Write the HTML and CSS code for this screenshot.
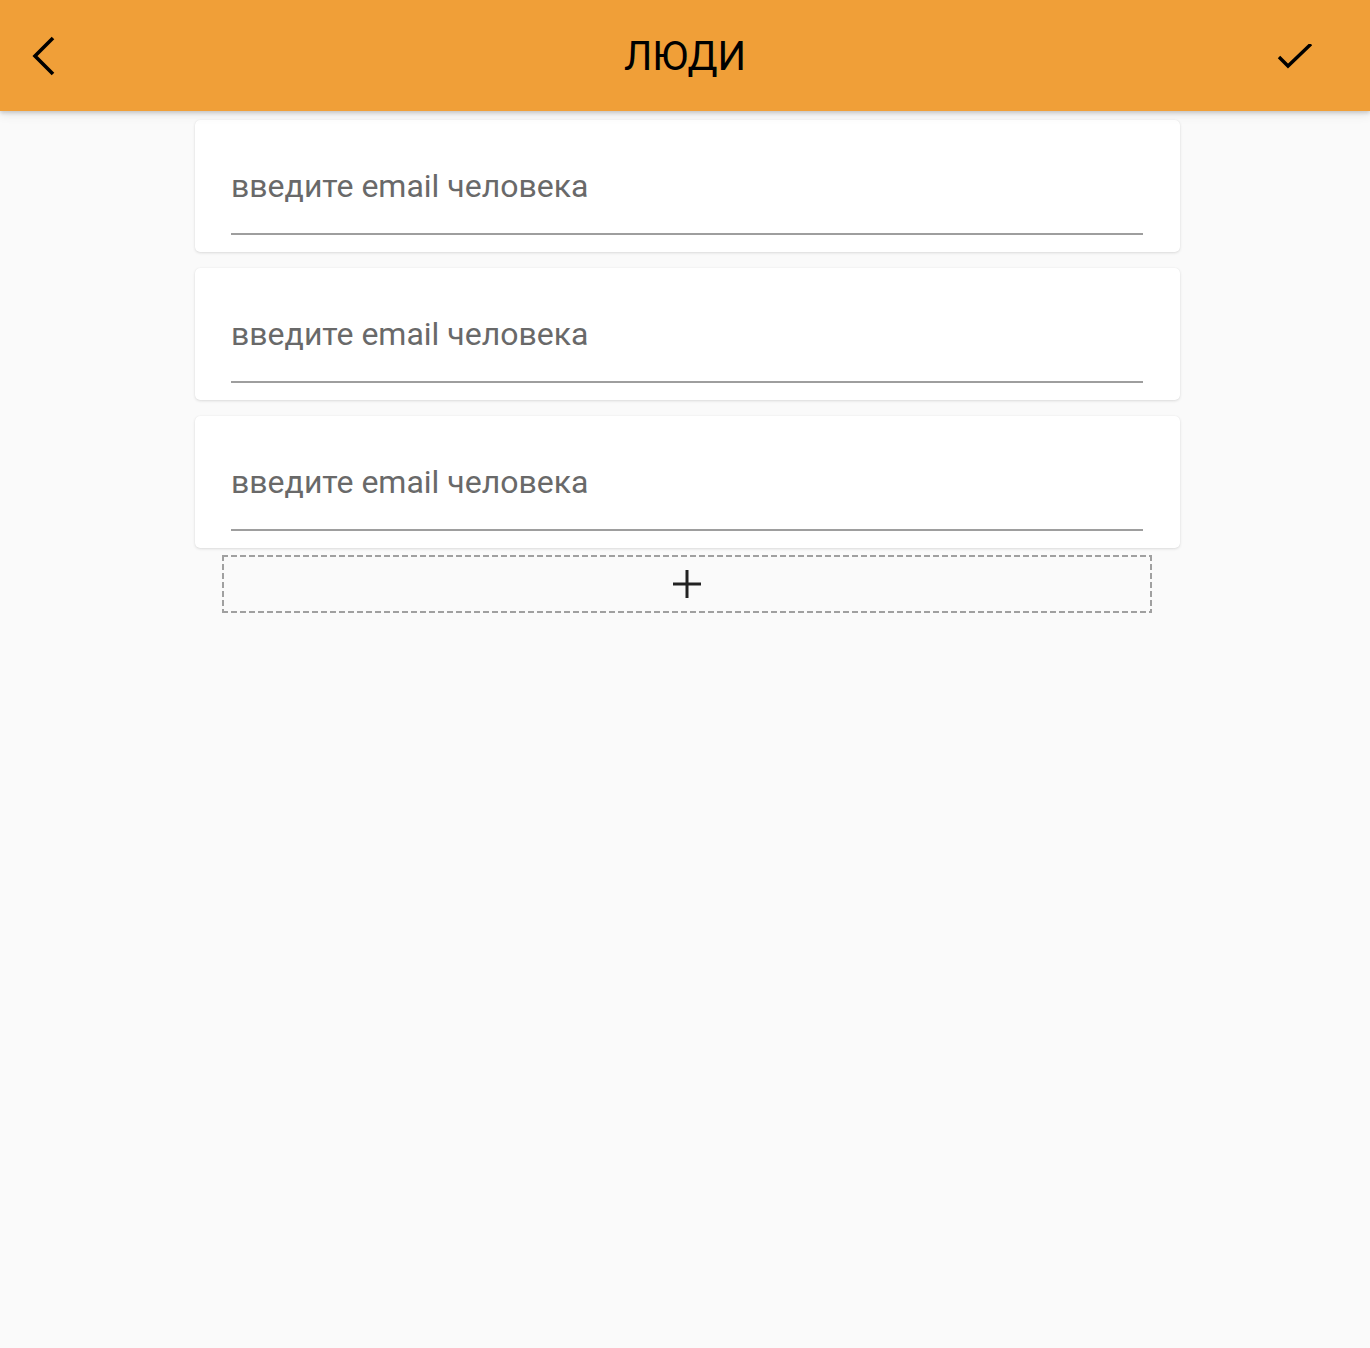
FILE: index.html
```html
<!DOCTYPE html>
<html lang="ru">
<head>
<meta charset="utf-8">
<title>Люди</title>
<link rel="stylesheet" href="styles.css">
</head>
<body>
<header class="appbar">
  <button class="icon-btn back" aria-label="Назад">
    <svg width="24" height="40" viewBox="0 0 24 40"><path d="M21 2 L3 20 L21 38" fill="none" stroke="#000" stroke-width="3.6"/></svg>
  </button>
  <h1 class="title">ЛЮДИ</h1>
  <button class="icon-btn ok" aria-label="Готово">
    <svg width="38" height="30" viewBox="0 0 38 30"><path d="M3 13 L12 22 L35 0" fill="none" stroke="#000" stroke-width="3.4"/></svg>
  </button>
</header>
<main class="content">
  <div class="card"><input class="field" type="text" placeholder="введите email человека"></div>
  <div class="card"><input class="field" type="text" placeholder="введите email человека"></div>
  <div class="card"><input class="field" type="text" placeholder="введите email человека"></div>
  <button class="add" aria-label="Добавить">
    <svg width="30" height="30" viewBox="0 0 30 30"><path d="M15 1 V29 M1 15 H29" stroke="#222" stroke-width="3"/></svg>
  </button>
</main>
</body>
</html>
```
FILE: styles.css
```css
* { box-sizing: border-box; }
html, body { margin: 0; padding: 0; }
body {
  background: #fafafa;
  font-family: Roboto, "Noto Sans", sans-serif;
  min-height: 1348px;
}
.appbar {
  height: 111px;
  background: #f09f38;
  display: flex;
  align-items: center;
  justify-content: space-between;
  box-shadow: 0 2px 4px rgba(0,0,0,0.16), 0 4px 10px rgba(0,0,0,0.08);
  position: relative;
  z-index: 1;
  padding: 0 56px 0 32px;
}
.icon-btn {
  background: none;
  border: 0;
  padding: 0;
  display: flex;
  cursor: pointer;
}
.ok { margin-top: 6px; }
.title {
  margin: 0;
  font-weight: 400;
  font-size: 40px;
  color: #000;
  position: absolute;
  left: 0;
  right: 0;
  text-align: center;
  pointer-events: none;
  top: 32px;
  line-height: 50px;
}
.content {
  width: 985px;
  margin-left: 195px;
  padding-top: 9px;
  display: flex;
  flex-direction: column;
  gap: 16px;
}
.card {
  background: #fff;
  border-radius: 5px;
  height: 132px;
  padding: 36px 37px 0 36px;
  box-shadow: 0 1px 3px rgba(0,0,0,0.12), 0 0 1px rgba(0,0,0,0.08);
}
.field {
  display: block;
  width: 100%;
  height: 79px;
  border: 0;
  border-bottom: 2px solid #9e9e9e;
  background: transparent;
  font-family: Roboto, sans-serif;
  font-size: 32px;
  color: #333;
  padding: 0 0 17px 0;
  outline: none;
}
.field::placeholder { color: #696969; opacity: 1; }
.add {
  margin: -9px 0 0 27px;
  width: 930px;
  height: 58px;
  border: 0;
  background-color: transparent;
  background-image:
    repeating-linear-gradient(90deg, #a0a0a0 0 6px, transparent 6px 9px),
    repeating-linear-gradient(90deg, #a0a0a0 0 6px, transparent 6px 9px),
    repeating-linear-gradient(180deg, #a0a0a0 0 6px, transparent 6px 9px),
    repeating-linear-gradient(180deg, #a0a0a0 0 6px, transparent 6px 9px);
  background-size: 100% 2px, 100% 2px, 2px 100%, 2px 100%;
  background-position: 0 0, 0 100%, 0 0, 100% 0;
  background-repeat: no-repeat;
  display: flex;
  align-items: center;
  justify-content: center;
  padding: 0;
  cursor: pointer;
}
```
